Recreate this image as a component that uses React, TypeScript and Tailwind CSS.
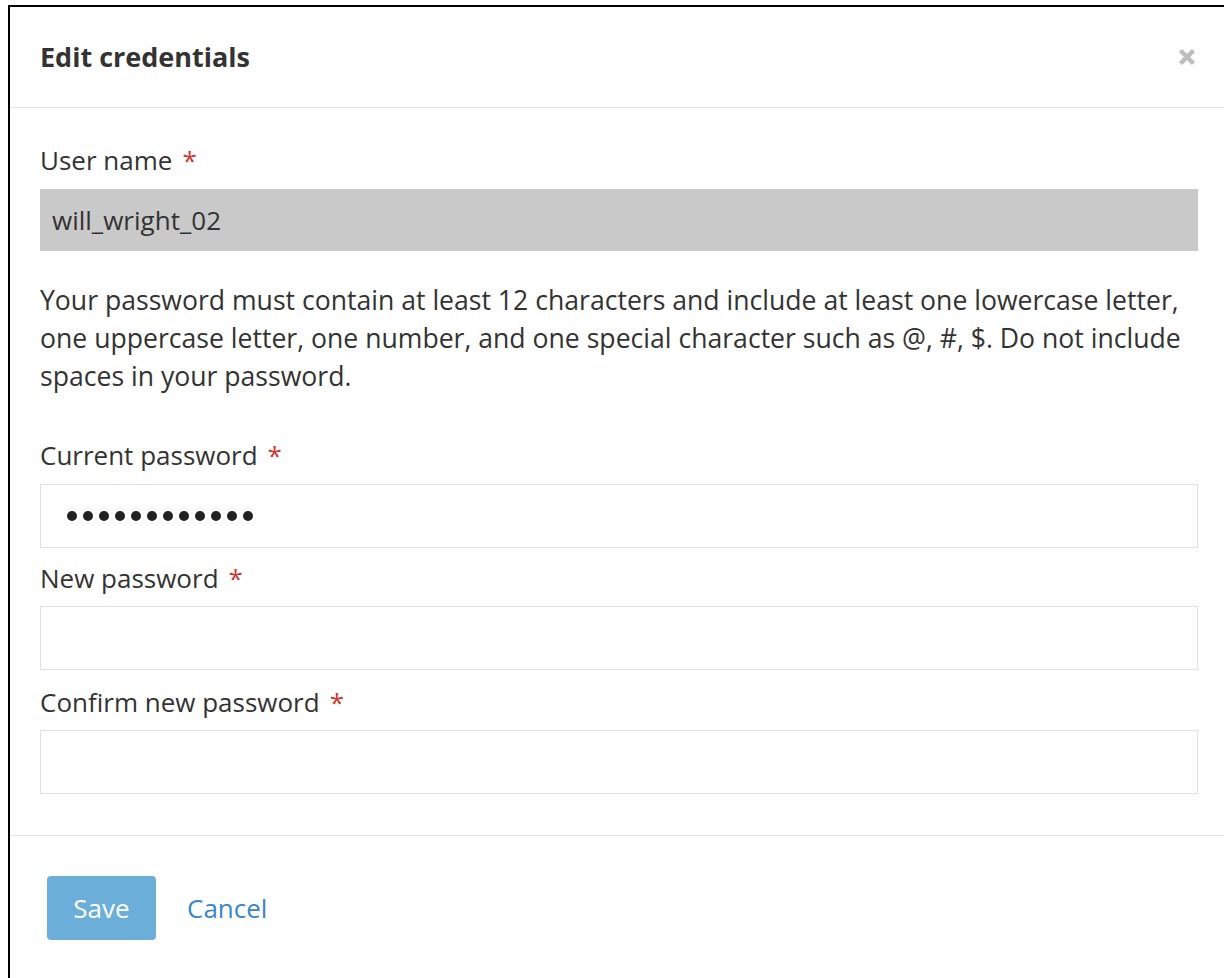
import type { ReactNode } from "react";

const font = { fontFamily: '"Open Sans", "Noto Sans", sans-serif' };

function Label({ children }: { children: ReactNode }) {
  return (
    <label className="block h-[32px] text-[26px] leading-[32px] text-[#333]">
      {children}
      <span className="ml-[10px] text-[#d0352f]">*</span>
    </label>
  );
}

function CloseIcon() {
  return (
    <svg width="18" height="18" viewBox="0 0 18 18" aria-hidden="true">
      <path d="M2.5 2.5 L15.5 15.5 M15.5 2.5 L2.5 15.5" stroke="#bdbdbd" strokeWidth="4.5" strokeLinecap="butt" />
    </svg>
  );
}

export default function App() {
  return (
    <div className="min-h-screen bg-white pl-[8px] pt-[5px]" style={font}>
      <div className="flex min-h-[973px] flex-col border-l-2 border-t-2 border-black bg-white">
        {/* Header */}
        <div className="flex h-[101px] items-center justify-between border-b border-[#e5e5e5] pl-[30px] pr-[27px]">
          <h1 className="text-[27px] font-bold text-[#333]">Edit credentials</h1>
          <button className="flex h-[20px] w-[20px] items-center justify-center">
            <CloseIcon />
          </button>
        </div>

        {/* Body */}
        <div className="border-b border-[#e5e5e5] pb-[41px] pl-[30px] pr-[26px] pt-[36px]">
          <Label>User name</Label>
          <div className="mt-[13px] flex h-[62px] items-center bg-[#c9c9c9] px-[12px] text-[26px] text-[#333]">
            will_wright_02
          </div>

          <p className="mt-[30px] text-[26.6px] leading-[38px] text-[#333]">
            Your password must contain at least 12 characters and include at least one lowercase letter,
            one uppercase letter, one number, and one special character such as @, #, $. Do not include
            spaces in your password.
          </p>

          <div className="mt-[44px]">
            <Label>Current password</Label>
            <div className="mt-[13px] flex h-[64px] items-center gap-[6px] border border-[#e0e0e0] pl-[26px]">
              {Array.from({ length: 12 }).map((_, i) => (
                <span key={i} className="h-[10px] w-[10px] rounded-full bg-[#222]" />
              ))}
            </div>
          </div>

          <div className="mt-[14px]">
            <Label>New password</Label>
            <input type="password" className="mt-[12px] block h-[64px] w-full border border-[#e0e0e0] outline-none" />
          </div>

          <div className="mt-[16px]">
            <Label>Confirm new password</Label>
            <input type="password" className="mt-[12px] block h-[64px] w-full border border-[#e0e0e0] outline-none" />
          </div>
        </div>

        {/* Footer */}
        <div className="flex items-center gap-[31px] pl-[37px] pt-[40px]">
          <button className="h-[64px] w-[109px] rounded-[4px] bg-[#6aaed9] text-[26px] text-white">Save</button>
          <a href="#" className="text-[26px] text-[#3887c8]">Cancel</a>
        </div>
      </div>
    </div>
  );
}
